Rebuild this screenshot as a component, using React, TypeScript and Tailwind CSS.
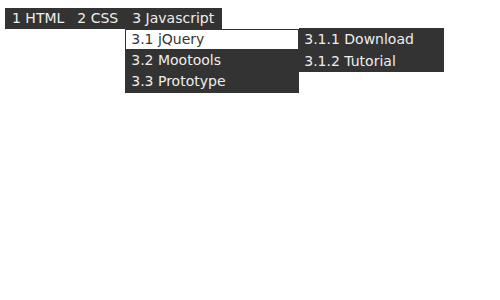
import React from "react";

const font = { fontFamily: '"DejaVu Sans", Verdana, sans-serif' };

export default function App() {
  return (
    <div className="w-[500px] h-[300px] bg-white relative" style={font}>
      <ul className="absolute left-[5px] top-[8px] flex bg-[#333333] text-[14px] leading-[21px] text-[#eeeeee]">
        <li className="pl-[7px] pr-[6px]">1 HTML</li>
        <li className="px-[7px]">2 CSS</li>
        <li className="relative pl-[7px] pr-[8px]">
          3 Javascript
          <ul className="absolute left-0 top-[21px] w-[174px] bg-[#333333]">
            <li className="relative h-[21px] bg-white text-[#333333] border border-[#333333] leading-[19px] pl-[5px]">
              3.1 jQuery
              <ul className="absolute left-[173px] top-[-2px] w-[145px] bg-[#333333] text-[#eeeeee] leading-[22px]">
                <li className="h-[22px] px-[5px]">3.1.1 Download</li>
                <li className="h-[22px] px-[5px]">3.1.2 Tutorial</li>
              </ul>
            </li>
            <li className="h-[21px] px-[6px]">3.2 Mootools</li>
            <li className="h-[22px] px-[6px]">3.3 Prototype</li>
          </ul>
        </li>
      </ul>
    </div>
  );
}
